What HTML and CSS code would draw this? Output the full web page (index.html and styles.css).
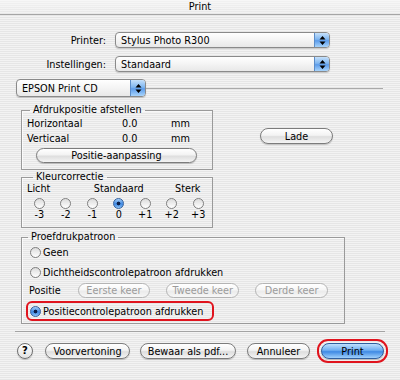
FILE: index.html
```html
<!DOCTYPE html>
<html lang="nl">

<head>
    <meta charset="utf-8" />
    <title>Print</title>
    <link rel="stylesheet" href="styles.css">
</head>

<body>
    <div class="titlebar">Print</div>

    <div class="sheet">
        <div class="field-row">
            <label>Printer:</label>
            <div class="popup wide">Stylus Photo R300<span class="popup-arrows"><svg width="7" height="9" viewBox="0 0 7 9"><path d="M3.5 0L6.5 3.5H0.5Z M3.5 9L6.5 5.5H0.5Z"/></svg></span></div>
        </div>
        <div class="field-row second">
            <label>Instellingen:</label>
            <div class="popup wide">Standaard<span class="popup-arrows"><svg width="7" height="9" viewBox="0 0 7 9"><path d="M3.5 0L6.5 3.5H0.5Z M3.5 9L6.5 5.5H0.5Z"/></svg></span></div>
        </div>

        <div class="pane-row">
            <div class="popup pane-select">EPSON Print CD<span class="popup-arrows"><svg width="7" height="9" viewBox="0 0 7 9"><path d="M3.5 0L6.5 3.5H0.5Z M3.5 9L6.5 5.5H0.5Z"/></svg></span></div>
            <span class="pane-rule"></span>
        </div>

        <div class="pane">
            <div class="pane-left">
                <fieldset class="group">
                    <legend class="legend-offset">Afdrukpositie afstellen</legend>
                    <div class="group-body offset">
                        <div class="offset-grid">
                            <span>Horizontaal</span><span>0.0</span><span>mm</span>
                            <span>Verticaal</span><span>0.0</span><span>mm</span>
                        </div>
                        <button class="aqua adjust">Positie-aanpassing</button>
                    </div>
                </fieldset>

                <fieldset class="group color">
                    <legend class="legend-color">Kleurcorrectie</legend>
                    <div class="group-body scale-body">
                        <div class="scale-labels">
                            <span class="lo">Licht</span>
                            <span class="mid">Standaard</span>
                            <span class="hi">Sterk</span>
                        </div>
                        <div class="scale">
                            <div class="step"><span class="radio"></span><span>-3</span></div>
                            <div class="step"><span class="radio"></span><span>-2</span></div>
                            <div class="step"><span class="radio"></span><span>-1</span></div>
                            <div class="step"><span class="radio on"></span><span>0</span></div>
                            <div class="step"><span class="radio"></span><span>+1</span></div>
                            <div class="step"><span class="radio"></span><span>+2</span></div>
                            <div class="step"><span class="radio"></span><span>+3</span></div>
                        </div>
                    </div>
                </fieldset>
            </div>
            <div class="pane-right">
                <button class="aqua tray">Lade</button>
            </div>
        </div>

        <fieldset class="group proof">
            <legend class="legend-proof">Proefdrukpatroon</legend>
            <div class="group-body proof-body">
                <div class="choice"><span class="radio"></span>Geen</div>
                <div class="choice gap"><span class="radio"></span>Dichtheidscontrolepatroon afdrukken</div>
                <div class="position-row">
                    <span class="position-label">Positie</span>
                    <button class="aqua off">Eerste keer</button>
                    <button class="aqua off">Tweede keer</button>
                    <button class="aqua off">Derde keer</button>
                </div>
                <div class="choice marked"><span class="radio on"></span>Positiecontrolepatroon afdrukken</div>
            </div>
        </fieldset>

        <span class="separator"></span>

        <div class="actions">
            <span class="help">?</span>
            <button class="aqua preview">Voorvertoning</button>
            <button class="aqua pdf">Bewaar als pdf...</button>
            <button class="aqua cancel">Annuleer</button>
            <span class="default-ring"><button class="aqua print">Print</button></span>
        </div>
    </div>
</body>
</html>
```

FILE: styles.css
```css
body {
    margin: 0;
    width: 400px;
    height: 380px;
    overflow: hidden;
    font-family: "DejaVu Sans", sans-serif;
    font-size: 9.7px;
    color: #000;
    background: repeating-linear-gradient(#f3f3f3 0 1px, #e6e6e6 1px 2px);
}

.titlebar {
    height: 14px;
    line-height: 14px;
    text-align: center;
    border-bottom: 1px solid #a5a5a5;
    background: linear-gradient(rgba(255,255,255,.55), rgba(255,255,255,.2)),
                repeating-linear-gradient(#eeeeee 0 1px, #e2e2e2 1px 2px);
}

.sheet {
    padding-top: 17px;
}

/* popups */

.field-row {
    display: flex;
    align-items: center;
    height: 16px;
}

.field-row.second {
    margin-top: 8px;
}

.field-row label {
    width: 106px;
    margin-right: 9px;
    text-align: right;
}

.popup {
    box-sizing: border-box;
    display: flex;
    align-items: center;
    height: 16px;
    padding-left: 5px;
    border: 1px solid #8a8a8a;
    border-radius: 4px;
    background: linear-gradient(#ffffff, #f4f4f4 50%, #e8e8e8);
    box-shadow: 0 1px 1px rgba(0,0,0,.18);
}

.popup.wide {
    width: 215px;
}

.popup-arrows {
    display: flex;
    align-items: center;
    justify-content: center;
    box-sizing: border-box;
    width: 15px;
    height: 100%;
    margin-left: auto;
    border-left: 1px solid #5b8cc8;
    border-radius: 0 3px 3px 0;
    background: linear-gradient(#c6e1fb, #7fb6f0 45%, #5c9ceb 55%, #a8d4fb);
}

.pane-row {
    display: flex;
    align-items: center;
    margin-top: 7px;
    padding-left: 16px;
}

.popup.pane-select {
    width: 130px;
    height: 18px;
}

.pane-rule {
    flex: 1;
    height: 1px;
    margin-right: 17px;
    background: #a9a9a9;
}

/* group boxes */

.pane {
    display: flex;
    margin-top: 7px;
}

.pane-left {
    padding-left: 21px;
}

.group {
    box-sizing: border-box;
    width: 192px;
    min-width: 0;
    margin: 0;
    padding: 0;
    border: 1px solid #9a9a9a;
    box-shadow: inset 1px 1px 0 rgba(255,255,255,.7);
}

.group legend {
    padding: 0 3px;
    line-height: 12px;
}

.legend-offset { margin-left: 8px; }
.legend-color { margin-left: 11px; }
.legend-proof { margin-left: 6px; }

.group.color {
    margin-top: 1px;
}

.group-body.offset {
    padding: 0 5px 6px;
}

.offset-grid {
    display: grid;
    grid-template-columns: 95px 49px auto;
    line-height: 15px;
}

button.aqua {
    box-sizing: border-box;
    height: 16px;
    padding: 0;
    font-family: inherit;
    font-size: inherit;
    color: #000;
    border: 1px solid #7c7c7c;
    border-radius: 8px;
    background: linear-gradient(#ffffff, #f3f3f3 45%, #dedede 55%, #f4f4f4);
    box-shadow: 0 1px 1px rgba(0,0,0,.2);
}

.adjust {
    display: block;
    width: 161px;
    margin: 2px 0 0 9px;
}

button.adjust {
    height: 15px;
}

.scale-body {
    padding: 0 0 6px 4px;
}

.scale-labels,
.scale {
    display: grid;
    grid-template-columns: repeat(7, 26.5px);
    line-height: 12px;
}

.scale-labels .lo { grid-column: 1 / 3; justify-self: start; margin-left: 1px; }
.scale-labels .mid { grid-column: 3 / 6; justify-self: center; }
.scale-labels .hi { grid-column: 6 / 8; justify-self: end; margin-right: 11px; }

.step {
    display: flex;
    flex-direction: column;
    align-items: center;
    padding-top: 3px;
}

.radio {
    box-sizing: border-box;
    display: inline-block;
    flex: none;
    width: 11px;
    height: 11px;
    border: 1px solid #7f7f7f;
    border-radius: 50%;
    background: linear-gradient(#dcdcdc, #ffffff);
}

.radio.on {
    border-color: #34609c;
    background: radial-gradient(circle, #0b1f48 0 1.6px, transparent 2.2px),
                linear-gradient(#a7d0f7, #3c86e2 55%, #8cc3f6);
}

.pane-right {
    padding: 24px 0 0 47px;
}

.tray {
    width: 73px;
}

.group.proof {
    width: 324px;
    margin: 3px 0 0 21px;
}

.proof-body {
    display: flex;
    flex-direction: column;
    padding: 0 0 2px 8px;
}

.choice {
    display: flex;
    align-items: center;
    height: 16px;
    margin-top: 1px;
}

.choice .radio {
    margin-right: 2px;
}

.choice.gap {
    margin-top: 4px;
}

.position-row {
    display: flex;
    align-items: center;
    margin-top: 3px;
}

.position-label {
    width: 50px;
    margin-left: -1px;
}

button.aqua.off {
    width: 75px;
    height: 15px;
    margin-right: 16px;
    color: #9b9b9b;
    border-color: #b4b4b4;
    box-shadow: none;
    background: linear-gradient(#ffffff, #f6f6f6 45%, #ebebeb 55%, #f7f7f7);
}

.choice.marked {
    align-self: flex-start;
    display: inline-flex;
    box-sizing: border-box;
    height: 20px;
    margin: 3px 0 0 -4px;
    padding: 0 9px 0 2px;
    border: 2px solid #e0141e;
    border-radius: 6px;
}

/* bottom buttons */

.separator {
    display: block;
    width: 370px;
    height: 1px;
    margin: 7px 0 0 15px;
    background: #a3a3a3;
}

.actions {
    display: flex;
    align-items: center;
    margin-top: 7px;
    padding-left: 17px;
}

.help {
    box-sizing: border-box;
    width: 16px;
    height: 16px;
    line-height: 14px;
    text-align: center;
    font-weight: bold;
    font-size: 10px;
    border: 1px solid #6f6f6f;
    border-radius: 50%;
    background: linear-gradient(#ffffff, #e2e2e2);
    box-shadow: 0 1px 1px rgba(0,0,0,.2);
}

.preview { width: 85px; margin-left: 12px; }
.pdf { width: 96px; margin-left: 10px; }
.cancel { width: 63px; margin-left: 11px; }

.default-ring {
    display: flex;
    margin-left: 7px;
    padding: 2px;
    border: 2px solid #e0141e;
    border-radius: 11px;
}

button.aqua.print {
    width: 63px;
    border-color: #2f5f9f;
    background: linear-gradient(#bfe0fd, #6eaef1 45%, #3f8ae4 55%, #9fd0fc);
}
```
